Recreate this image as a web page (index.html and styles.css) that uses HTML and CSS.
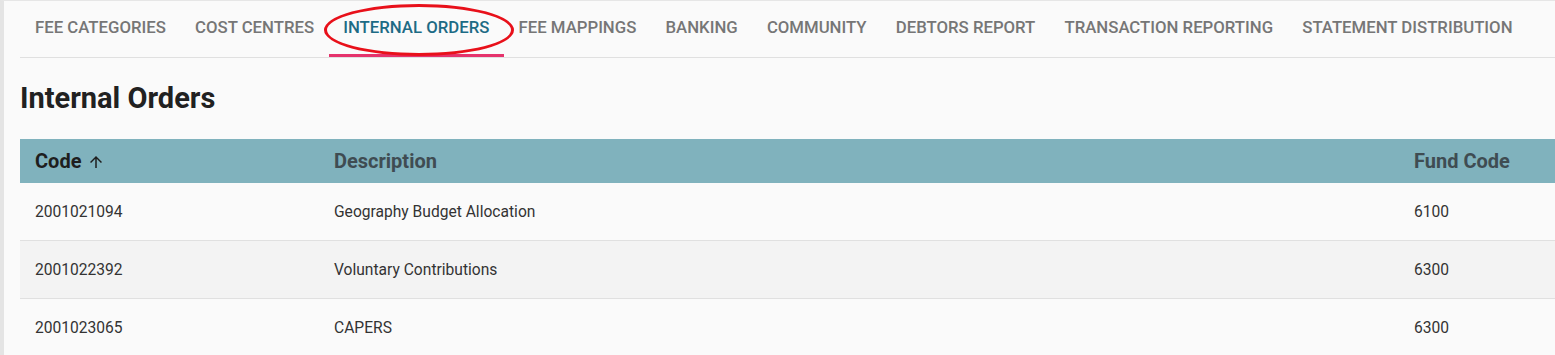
FILE: index.html
```html
<!DOCTYPE html>
<html lang="en">
<head>
    <meta charset="UTF-8">
    <title>Internal Orders</title>
    <link rel="stylesheet" href="styles.css">
</head>
<body>
    <div class="page">
        <div class="tabs">
            <div class="tab">Fee Categories</div>
            <div class="tab">Cost Centres</div>
            <div class="tab active">Internal Orders</div>
            <div class="tab">Fee Mappings</div>
            <div class="tab">Banking</div>
            <div class="tab">Community</div>
            <div class="tab">Debtors Report</div>
            <div class="tab">Transaction Reporting</div>
            <div class="tab">Statement Distribution</div>
            <div class="circle"></div>
        </div>

        <h1 class="title">Internal Orders</h1>

        <table class="grid">
            <thead>
                <tr>
                    <th class="col-code sorted">Code
                        <svg class="arrow" viewBox="0 0 24 24"><path d="M4 12l1.41 1.41L11 7.83V20h2V7.83l5.58 5.59L20 12l-8-8-8 8z"/></svg>
                    </th>
                    <th class="col-desc">Description</th>
                    <th class="col-fund">Fund Code</th>
                </tr>
            </thead>
            <tbody>
                <tr>
                    <td>2001021094</td>
                    <td>Geography Budget Allocation</td>
                    <td>6100</td>
                </tr>
                <tr>
                    <td>2001022392</td>
                    <td>Voluntary Contributions</td>
                    <td>6300</td>
                </tr>
                <tr>
                    <td>2001023065</td>
                    <td>CAPERS</td>
                    <td>6300</td>
                </tr>
            </tbody>
        </table>
    </div>
</body>
</html>
```

FILE: styles.css
```css
body {
    margin: 0;
    font-family: Roboto, "Liberation Sans", sans-serif;
    background-color: #fafafa;
    color: #333;
    overflow: hidden;
}
.page {
    border-top: 1px solid #e6e6e6;
    border-left: 4px solid #e4e4e4;
    padding-left: 16px;
    min-height: 360px;
}
.tabs {
    position: relative;
    display: flex;
    height: 56px;
    border-bottom: 1px solid #e0e0e0;
}
.tab {
    padding: 0 14.6px;
    line-height: 53px;
    font-size: 16.75px;
    font-weight: 500;
    text-transform: uppercase;
    color: #767676;
    border-bottom: 3px solid transparent;
    white-space: nowrap;
}
.tab:first-child {
    padding-left: 15px;
}
.tab.active {
    color: #1d6b85;
    border-bottom-color: #e5336c;
}
.circle {
    position: absolute;
    left: 304px;
    top: 3px;
    width: 184px;
    height: 46px;
    border: 3px solid #e8101a;
    border-radius: 50%;
}
.title {
    margin: 23px 0 24px;
    font-size: 29px;
    font-weight: 700;
    color: #212121;
    line-height: 34px;
}
.grid {
    width: calc(100% + 2px);
    border-collapse: collapse;
    font-size: 15.6px;
}
.grid th {
    background-color: #80b2bd;
    height: 44px;
    padding: 0 15px;
    text-align: left;
    font-size: 20px;
    font-weight: 700;
    color: #3f4c52;
}
.grid th.sorted {
    color: #1e1e1e;
}
.arrow {
    width: 18px;
    height: 18px;
    margin-left: 1px;
    vertical-align: -3px;
    fill: #1e1e1e;
}
.col-code {
    width: 269px;
}
.col-fund {
    width: 128px;
}
.grid td {
    height: 57px;
    padding: 0 15px;
    border-bottom: 1px solid #e0e0e0;
    color: #333;
}
.grid tbody tr:nth-child(even) {
    background-color: #f3f3f3;
}
```
